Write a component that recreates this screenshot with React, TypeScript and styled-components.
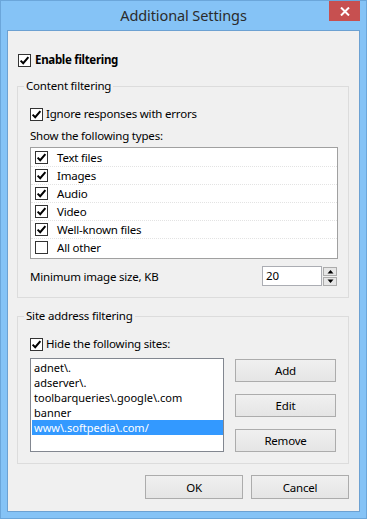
import React from "react";
import styled, { createGlobalStyle } from "styled-components";

const GlobalStyle = createGlobalStyle`
  html, body { margin: 0; padding: 0; }
  body {
    width: 367px;
    height: 519px;
    overflow: hidden;
    font-family: "Noto Sans", "Open Sans", sans-serif;
    font-size: 11.5px;
    letter-spacing: -0.2px;
    color: #000;
  }
  * { box-sizing: border-box; }
`;

const Window = styled.div`
  width: 367px;
  height: 519px;
  border: 1px solid #6ba6da;
  background: #85c3f6;
  padding: 0 6px 6px;
  display: flex;
  flex-direction: column;
`;

const TitleBar = styled.div`
  height: 29px;
  display: flex;
  align-items: flex-start;
  flex-shrink: 0;
`;

const Spacer = styled.div`
  width: 31px;
`;

const Title = styled.div`
  flex: 1;
  text-align: center;
  line-height: 28px;
  font-size: 14.5px;
  letter-spacing: -0.1px;
  color: #2b2b2b;
`;

const CloseButton = styled.div`
  width: 31px;
  height: 20px;
  background: #c75050;
  display: flex;
  align-items: center;
  justify-content: center;
`;

const Client = styled.div`
  flex: 1;
  background: #f0f0f0;
  border: 1px solid #6ca1d2;
  padding: 21px 10px 12px 9px;
  display: flex;
  flex-direction: column;
`;

const CheckRow = styled.label<{ $bold?: boolean; $indent?: number; $mt?: number }>`
  display: flex;
  align-items: center;
  gap: ${(p) => (p.$bold ? 4 : 3)}px;
  height: 16px;
  line-height: 16px;
  margin-left: ${(p) => p.$indent ?? 0}px;
  margin-top: ${(p) => p.$mt ?? 0}px;
  font-weight: ${(p) => (p.$bold ? 700 : 400)};
  letter-spacing: ${(p) => (p.$bold ? "-0.3px" : "-0.2px")};
  white-space: nowrap;
`;

const Box = styled.span`
  width: 13px;
  height: 13px;
  border: 1px solid #333;
  background: #fff;
  display: flex;
  align-items: center;
  justify-content: center;
  flex-shrink: 0;
`;

const Group = styled.div<{ $mt: number }>`
  border: 1px solid #dcdcdc;
  margin-top: ${(p) => p.$mt}px;
  padding: 0 10px 11px 12px;
`;

const Legend = styled.div`
  width: fit-content;
  margin: -9px 0 0 -6px;
  padding: 0 2px;
  line-height: 16px;
  height: 16px;
  background: #f0f0f0;
  white-space: nowrap;
`;

const Label = styled.div<{ $mt: number }>`
  margin-top: ${(p) => p.$mt}px;
  line-height: 16px;
  height: 16px;
  white-space: nowrap;
`;

const TypesList = styled.div`
  margin-top: 3px;
  height: 112px;
  border: 1px solid #a0a0a0;
  background: #fff;
  padding: 1px 0;
`;

const TypeRow = styled.div<{ $last?: boolean }>`
  height: 18px;
  display: flex;
  align-items: center;
  padding-left: 4px;
  gap: 9px;
  border-bottom: 1px dotted ${(p) => (p.$last ? "transparent" : "#e3e3e3")};
  white-space: nowrap;
`;

const SizeRow = styled.div`
  margin-top: 7px;
  height: 20px;
  display: flex;
  align-items: center;
`;

const SizeLabel = styled.div`
  flex: 1;
  white-space: nowrap;
`;

const NumberInput = styled.div`
  width: 60px;
  height: 20px;
  border: 1px solid #abadb3;
  background: #fff;
  padding-left: 3px;
  line-height: 18px;
`;

const Spinner = styled.div`
  margin-left: 1px;
  margin-right: 1px;
  display: flex;
  flex-direction: column;
  gap: 1px;
`;

const SpinButton = styled.div`
  width: 14px;
  height: 9px;
  border: 1px solid #acacac;
  background: #e6e6e6;
  display: flex;
  align-items: center;
  justify-content: center;
`;

const SiteRow = styled.div`
  margin-top: 6px;
  display: flex;
  gap: 11px;
`;

const SiteList = styled.div`
  width: 194px;
  height: 94px;
  border: 1px solid #828790;
  background: #fff;
  padding: 1px 0 0 1px;
`;

const SiteItem = styled.div<{ $selected?: boolean }>`
  height: 15px;
  line-height: 15px;
  font-size: 11px;
  letter-spacing: 0;
  padding-left: 2px;
  background: ${(p) => (p.$selected ? "#3399ff" : "transparent")};
  color: ${(p) => (p.$selected ? "#fff" : "#000")};
  white-space: nowrap;
`;

const ButtonColumn = styled.div`
  display: flex;
  flex-direction: column;
  gap: 12px;
  padding-top: 1px;
`;

const Button = styled.div<{ $w: number; $h: number }>`
  width: ${(p) => p.$w}px;
  height: ${(p) => p.$h}px;
  border: 1px solid #acacac;
  background: linear-gradient(#f0f0f0, #e5e5e5);
  display: flex;
  align-items: center;
  justify-content: center;
  color: #000;
`;

const Footer = styled.div`
  margin-top: auto;
  display: flex;
  justify-content: flex-end;
  gap: 8px;
`;

const Check = () => (
  <svg width="11" height="11" viewBox="0 0 11 11">
    <path d="M1.6 5.6 L4.2 8.2 L9.4 2.2" fill="none" stroke="#000" strokeWidth="2" />
  </svg>
);

const CheckBox: React.FC<{ checked: boolean }> = ({ checked }) => (
  <Box>{checked ? <Check /> : null}</Box>
);

const types: [string, boolean][] = [
  ["Text files", true],
  ["Images", true],
  ["Audio", true],
  ["Video", true],
  ["Well-known files", true],
  ["All other", false],
];

const sites = [
  "adnet\\.",
  "adserver\\.",
  "toolbarqueries\\.google\\.com",
  "banner",
  "www\\.softpedia\\.com/",
];

export default function App() {
  return (
    <>
      <GlobalStyle />
      <Window>
        <TitleBar>
          <Spacer />
          <Title>Additional Settings</Title>
          <CloseButton>
            <svg width="10" height="9" viewBox="0 0 10 9">
              <path d="M1 0.5 L9 8.5 M9 0.5 L1 8.5" stroke="#fff" strokeWidth="2" />
            </svg>
          </CloseButton>
        </TitleBar>
        <Client>
          <CheckRow $bold $indent={1}>
            <CheckBox checked />
            Enable filtering
          </CheckRow>

          <Group $mt={18}>
            <Legend>Content filtering</Legend>
            <CheckRow $mt={12}>
              <CheckBox checked />
              Ignore responses with errors
            </CheckRow>
            <Label $mt={6}>Show the following types:</Label>
            <TypesList>
              {types.map(([name, on], i) => (
                <TypeRow key={name} $last={i === types.length - 1}>
                  <CheckBox checked={on} />
                  {name}
                </TypeRow>
              ))}
            </TypesList>
            <SizeRow>
              <SizeLabel>Minimum image size, KB</SizeLabel>
              <NumberInput>20</NumberInput>
              <Spinner>
                <SpinButton>
                  <svg width="7" height="5" viewBox="0 0 7 5">
                    <path d="M0.5 4.5 L3.5 1 L6.5 4.5 Z" fill="#000" />
                  </svg>
                </SpinButton>
                <SpinButton>
                  <svg width="7" height="5" viewBox="0 0 7 5">
                    <path d="M0.5 0.5 L3.5 4 L6.5 0.5 Z" fill="#000" />
                  </svg>
                </SpinButton>
              </Spinner>
            </SizeRow>
          </Group>

          <Group $mt={18}>
            <Legend>Site address filtering</Legend>
            <CheckRow $mt={12}>
              <CheckBox checked />
              Hide the following sites:
            </CheckRow>
            <SiteRow>
              <SiteList>
                {sites.map((s, i) => (
                  <SiteItem key={s} $selected={i === sites.length - 1}>
                    {s}
                  </SiteItem>
                ))}
              </SiteList>
              <ButtonColumn>
                <Button $w={101} $h={23}>Add</Button>
                <Button $w={101} $h={23}>Edit</Button>
                <Button $w={101} $h={23}>Remove</Button>
              </ButtonColumn>
            </SiteRow>
          </Group>

          <Footer>
            <Button $w={98} $h={24}>OK</Button>
            <Button $w={98} $h={24}>Cancel</Button>
          </Footer>
        </Client>
      </Window>
    </>
  );
}
